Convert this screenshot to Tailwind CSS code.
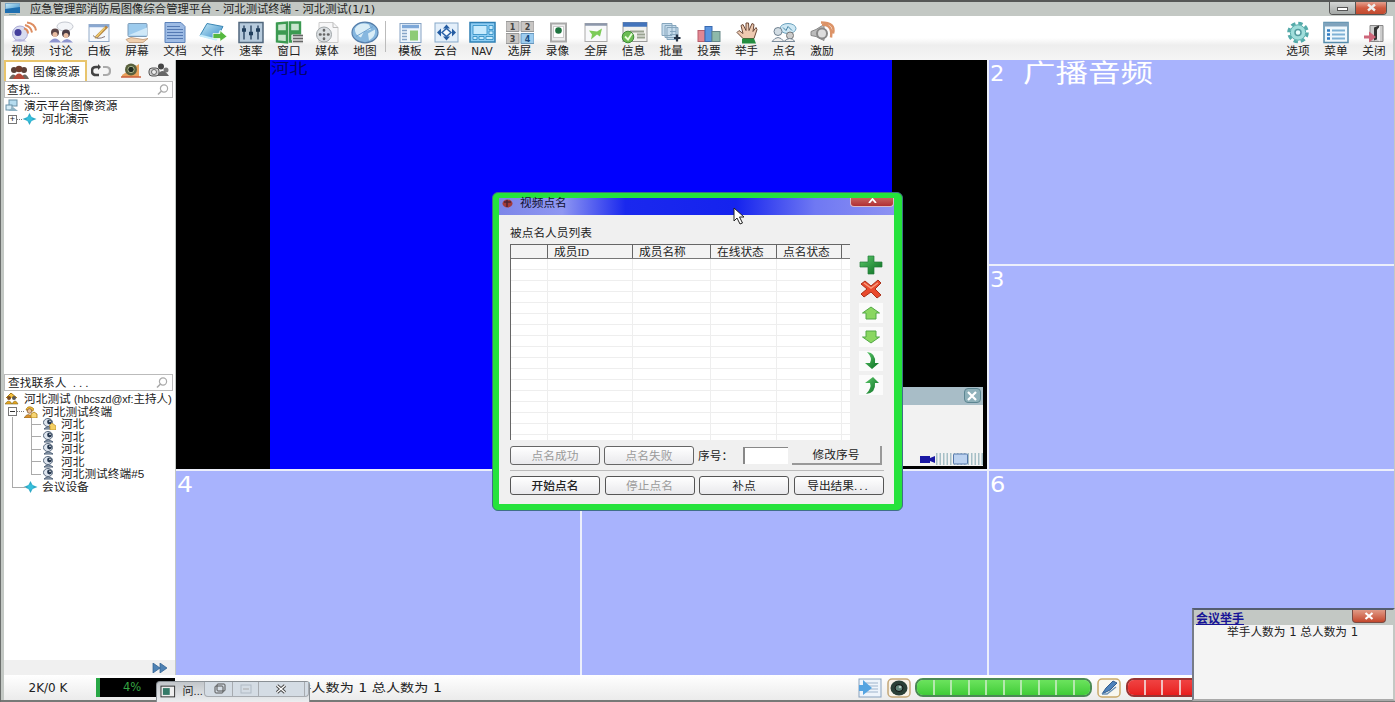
<!DOCTYPE html>
<html lang="zh-CN">
<head>
<meta charset="utf-8">
<title>图像综合管理平台</title>
<script src="https://cdn.jsdelivr.net/npm/@tailwindcss/browser@4"></script>
</head>
<body class="overflow-hidden">
<svg class="absolute h-0 w-0">
  <defs>
    <linearGradient id="gb" x1="0" y1="0" x2="1" y2="1"><stop offset="0" stop-color="#c4eaf8"/><stop offset="1" stop-color="#3488c6"/></linearGradient>
    <linearGradient id="gd" x1="0" y1="0" x2="1" y2="1"><stop offset="0" stop-color="#5cc96a"/><stop offset="1" stop-color="#086b20"/></linearGradient>
    <symbol id="star" viewBox="0 0 14 12"><path d="M7 0L9 4L14 6L9 8L7 12L5 8L0 6L5 4Z" fill="#2fa9c6"/><circle cx="7" cy="6" r="2.800" fill="#37bfdb"/></symbol>
    <symbol id="cam" viewBox="0 0 14 12"><ellipse cx="6" cy="4.500" rx="4.500" ry="4" fill="#dfe6ef" stroke="#56677c"/><circle cx="7.500" cy="4" r="2.400" fill="#26384f"/><circle cx="8" cy="3.300" r=".8" fill="#fff"/><path d="M2 11Q6 7 11 11Z" fill="#a9b7c8" stroke="#4f6076"/></symbol>
    <symbol id="home" viewBox="0 0 14 12"><path d="M1 5L6 0L12 5" fill="#f5c13c" stroke="#a87810"/><circle cx="4" cy="5" r="2" fill="#7a4b22"/><circle cx="9" cy="5" r="2" fill="#555"/><path d="M0 11Q4 5 7 11ZM7 11Q10 5 13 11Z" fill="#e8a51e" stroke="#7d6a1e" stroke-width=".6"/></symbol>
    <symbol id="user" viewBox="0 0 14 12"><path d="M2 4Q3 0 7 1Q11 2 9 5Z" fill="#f5c13c" stroke="#a87810" stroke-width=".8"/><circle cx="5.500" cy="5" r="2.300" fill="#e9c19a" stroke="#7a4b22" stroke-width=".7"/><path d="M0 12Q4 5 9 12Z" fill="#d98f2b" stroke="#7d5a1e" stroke-width=".6"/><path d="M7 8L10 6L13 8V12H7Z" fill="#f7d574" stroke="#a87810" stroke-width=".8"/></symbol>
    <symbol id="mag" viewBox="0 0 12 12"><circle cx="7" cy="4.500" r="3.600" fill="none" stroke="#aaa" stroke-width="1.200"/><path d="M4.500 7L1 10.500" stroke="#aaa" stroke-width="1.600"/></symbol>
  </defs>
</svg>
<div class="relative flex h-[702px] w-[1395px] flex-col overflow-hidden border-t-2 border-l border-t-[#555756] border-l-[#6b6e6c] bg-[#c3c8c4] font-['Liberation_Sans','Noto_Sans_CJK_SC',sans-serif] text-[11.7px] leading-none whitespace-nowrap text-[#222]">

  <!-- title bar -->
  <div class="flex h-[14px] shrink-0 items-center pl-1">
    <svg class="h-[12px] w-[15px]" viewBox="0 0 15 12"><rect x=".5" y=".5" width="14" height="9" fill="url(#gb)" stroke="#7ba8c8"/><path d="M0 6L15 4V10H0Z" fill="#1f6fb0"/><path d="M4 11.500H11" stroke="#8aa"/></svg>
    <span class="ml-[10px] pt-[2px] font-['DejaVu_Sans','Noto_Sans_CJK_SC',sans-serif] text-[11.300px] tracking-[0.05px]">应急管理部消防局图像综合管理平台 - 河北测试终端 - 河北测试(1/1)</span>
    <div class="mr-[8px] mb-[2px] ml-auto flex h-[13px] w-[58px] overflow-hidden rounded-b border border-t-0 border-[#555]">
      <div class="flex w-[25px] items-center justify-center bg-linear-to-b from-[#d5d7d6] to-[#a3a7a5]"><div class="mt-[3px] h-[4px] w-[11px] border border-[#555] bg-white"></div></div>
      <div class="flex flex-1 items-center justify-center border-l border-[#555] bg-linear-to-b from-[#e3a08f] via-[#d05a40] to-[#c14a2e]"><svg class="size-[9px]" viewBox="0 0 9 8"><path d="M1 1L8 7M8 1L1 7" stroke="#eee" stroke-width="2.400"/></svg></div>
    </div>
  </div>

  <!-- toolbar -->
  <div class="mr-[2px] ml-[3px] flex h-[44px] shrink-0 bg-linear-to-b from-white from-50% via-[#eeeeee] via-66% to-[#f5f5f5] pt-[5px] text-center [&>div]:flex [&>div]:shrink-0 [&>div]:flex-col [&>div]:items-center [&>div]:gap-px [&_svg]:h-[23px] [&_svg]:w-[28px]">
    <div class="w-[38px]"><svg viewBox="0 0 28 22"><circle cx="11" cy="12" r="7.500" fill="#d8dcf0" stroke="#a9a9d4"/><circle cx="9" cy="11" r="3.500" fill="#443f9c"/><path d="M3 20Q11 15 18 20Z" fill="#b7b6dd"/><path d="M15 7Q19 8 19 12M16 3.500Q22 5 23 11M18 1Q26 2 27 9" fill="none" stroke="#dd8d61" stroke-width="2"/></svg>视频</div>
    <div class="w-[38px]"><svg viewBox="0 0 28 22"><ellipse cx="18" cy="5" rx="8" ry="4.500" fill="#f3f5f8" stroke="#c4c8d0"/><circle cx="8" cy="11" r="4" fill="#5c4648"/><circle cx="8" cy="13" r="2.500" fill="#e9bda2"/><circle cx="19" cy="12" r="4" fill="#4b3c44"/><circle cx="19" cy="14" r="2.500" fill="#e9bda2"/><path d="M2 21Q8 13 14 21ZM14 21Q20 14 26 21Z" fill="#8e95cf"/></svg>讨论</div>
    <div class="w-[38px]"><svg viewBox="0 0 28 22"><rect x="4" y="3" width="20" height="17" fill="#f5f8fd" stroke="#93abc9"/><path d="M4 4.500H24" stroke="#89a7d0" stroke-width="2.500"/><path d="M11 16L22 5" stroke="#b78745" stroke-width="3"/><path d="M10 17L20 6" stroke="#f2cf6e" stroke-width="1.200"/><path d="M8 14Q12 19 20 15" fill="none" stroke="#877"/></svg>白板</div>
    <div class="w-[38px]"><svg viewBox="0 0 28 22"><rect x="5" y="2" width="19" height="13" rx="1" fill="#9dcbed" stroke="#7c9bb8"/><path d="M5 14L24 6V14Z" fill="#cfe8f8"/><path d="M3 18L8 16L20 18L25 17L20 21H6Z" fill="#efcfae" stroke="#b48b67" stroke-width=".7"/></svg>屏幕</div>
    <div class="w-[38px]"><svg viewBox="0 0 28 22"><path d="M4 1H20L24 5V21H4Z" fill="#9dbbe4" stroke="#5a80b8"/><path d="M6 5H19M6 8H22M6 11H22M6 14H22M6 17H22" stroke="#5479b3"/></svg>文档</div>
    <div class="w-[38px]"><svg viewBox="0 0 28 22"><path d="M8 2L24 5L17 18L1 14Z" fill="url(#gb)" stroke="#3b87b4"/><path d="M1 14L17 18L22 9" fill="none" stroke="#c5ecfb" stroke-width="2"/><path d="M14 12H21V9L28 15L21 20V17H14Z" fill="#55b83f" stroke="#fff" stroke-width=".7"/></svg>文件</div>
    <div class="w-[38px]"><svg viewBox="0 0 28 22"><rect x="2" y="1" width="24" height="20" fill="#b7cbdd" stroke="#51677d" stroke-width="1.500"/><path d="M7 4V18M14 4V18M21 4V18" stroke="#354f6b" stroke-width="1.500"/><path d="M5 8.500H9M12 12H16M19 8.500H23" stroke="#203e5c" stroke-width="3.500"/></svg>速率</div>
    <div class="w-[38px]"><svg viewBox="0 0 28 22"><path d="M2 2L12 1V10H2ZM15 1H25V10H15ZM2 12H12V21L2 20ZM15 12H25V20H15Z" fill="#c9e6cf" stroke="#3c9a52" stroke-width="2.400"/><rect x="17" y="13" width="11" height="9" fill="#ddd"/><path d="M18 14H28M18 17H28M18 20H28" stroke="#666" stroke-width="1.500"/></svg>窗口</div>
    <div class="w-[38px]"><svg viewBox="0 0 28 22"><path d="M6 1H20L25 6V21H6Z" fill="#f7f7f8" stroke="#ccc"/><path d="M20 1V6H25" fill="none" stroke="#bbb"/><circle cx="11" cy="13" r="7.500" fill="#dbdfe2" stroke="#9fa5a8"/><path d="M11 8.500V9M11 17V17.500M7 13H7.500M15 13H15.500M11 13H11.100" stroke="#666" stroke-width="2.600" stroke-linecap="round"/></svg>媒体</div>
    <div class="w-[38px]"><svg viewBox="0 0 28 22"><ellipse cx="14" cy="11" rx="13" ry="10.300" fill="#86b7df" stroke="#557eaa" stroke-width="1.200"/><path d="M4 7Q8 0 18 3L20 8L13 10L10 16Q3 13 4 7ZM17 12L24 8Q25 15 18 19Z" fill="#d9edf7"/><path d="M5 15L22 5" stroke="#6fa3d0"/></svg>地图</div>
    <div class="w-[8px]"><span class="-ml-[5px] block h-[31px] w-px bg-[#bbb]"></span></div>
    <div class="w-[36px]"><svg viewBox="0 0 28 22"><rect x="4" y="2" width="21" height="19" fill="#eff6fd" stroke="#85a2c3"/><path d="M6 5H23" stroke="#7ea8d8" stroke-width="3.500"/><path d="M6 9H11M6 12H11M6 15H11M6 18H11" stroke="#87a5c8" stroke-width="1.500"/><path d="M14 9H22V19H14Z" fill="#8ecb76"/></svg>模板</div>
    <div class="w-[35px]"><svg viewBox="0 0 28 22"><rect x="3" y="1.500" width="23" height="19" fill="#e3effa" stroke="#87a9ca"/><path d="M14.500 3L18 7H11ZM14.500 19L18 15H11ZM5 11L9 7V15ZM24 11L20 7V15Z" fill="#245ca2"/><path d="M14.500 7L19 11L14.500 15L10 11Z" fill="#f5fbff" stroke="#2c64aa" stroke-width="1.500"/></svg>云台</div>
    <div class="w-[38px]"><svg viewBox="0 0 28 22"><rect x="2" y="1" width="25" height="19.500" fill="#8dcdf4" stroke="#2e7fb4" stroke-width="1.500"/><path d="M5 4H19V13H5ZM21 4H25V8H21ZM21 9.500H25V13H21ZM5 15H9V18H5ZM11 15H16V18H11ZM18 15H25V18H18Z" fill="#c8ebfd" stroke="#2989bf" stroke-width=".8"/></svg><span class="font-['DejaVu_Sans'] text-[10.500px] leading-[12px]">NAV</span></div>
    <div class="w-[37px]"><svg viewBox="0 0 28 22"><path d="M0 0H13V10H0ZM15 0H28V10H15ZM0 12H13V22H0Z" fill="#c9c6c4" stroke="#999"/><path d="M15 12H28V22H15Z" fill="#9dcdf0" stroke="#6796bd"/><g font-size="8" font-weight="bold" fill="#444" text-anchor="middle" font-family="DejaVu Sans"><text x="6.500" y="8">1</text><text x="21.500" y="8">2</text><text x="6.500" y="20">3</text><text x="21.500" y="20" fill="#174c83">4</text></g></svg>选屏</div>
    <div class="w-[39px]"><svg viewBox="0 0 28 22"><rect x="7" y="2" width="15" height="18" fill="#eee" stroke="#aaa" stroke-width="2"/><rect x="9.500" y="5" width="10" height="11" fill="#fff" stroke="#ccc"/><circle cx="14.500" cy="9" r="3.300" fill="#1f7440"/></svg>录像</div>
    <div class="w-[37.700px]"><svg viewBox="0 0 28 22"><rect x="3" y="2" width="22" height="18" fill="#f8f9fb" stroke="#aaa"/><path d="M3 3H25" stroke="#8d97ab" stroke-width="2.500"/><path d="M7 9L15 10L20 7L18 15L15 13L9 18L10 13Z" fill="#7ccb58"/></svg>全屏</div>
    <div class="w-[37.700px]"><svg viewBox="0 0 28 22"><rect x="3" y="1" width="24" height="19" fill="#f1f1ee" stroke="#999"/><path d="M3 3H27" stroke="#4374bb" stroke-width="4.500"/><path d="M10 10H24M17 13H25M17 16H25" stroke="#9aa392" stroke-width="2"/><circle cx="8" cy="15.500" r="5.800" fill="#6cbc54" stroke="#3f8e38"/><path d="M5 15L8 18L12 12" fill="none" stroke="#eaffdc" stroke-width="1.800"/></svg>信息</div>
    <div class="w-[37.700px]"><svg viewBox="0 0 28 22"><path d="M5 2H15V14H5ZM8 4H19V16H8ZM10 6H21V18H10Z" fill="#c6dcec" stroke="#86a6bd"/><path d="M13 10H19M13 13H19" stroke="#85a6bd"/><path d="M20 13V20M17 16.500H23.500" stroke="#243345" stroke-width="2.200"/></svg>批量</div>
    <div class="w-[37.700px]"><svg viewBox="0 0 28 22"><rect x="3" y="9" width="7" height="11" fill="#e28792" stroke="#b95e6c"/><rect x="10" y="5" width="7" height="15" fill="#5b95df" stroke="#3869b0"/><rect x="17" y="10" width="8" height="10" fill="#8eb9aa" stroke="#688"/></svg>投票</div>
    <div class="w-[37.700px]"><svg viewBox="0 0 28 22"><path d="M10 17L4 11L6 9L10 12L8 4L10 3L13 9L13 1.500L15.500 1.500L16 9L19 2L21 3L20 10L23 6L24 8L21 17Z" fill="#eecab1" stroke="#6b4939"/><path d="M9 17H21L23 22H9Z" fill="#238d40"/></svg>举手</div>
    <div class="w-[37.700px]"><svg viewBox="0 0 28 22"><ellipse cx="18" cy="7" rx="8" ry="5" fill="#cee8f4" stroke="#6aa1bd"/><path d="M13 6L16 9L18 5L22 9" stroke="#4987a8" fill="none"/><circle cx="8" cy="10" r="4" fill="#d3dde4" stroke="#718291"/><circle cx="20" cy="14" r="3.500" fill="#ccc" stroke="#777"/><path d="M2 20Q8 12 14 20ZM14 20Q20 14 25 20Z" fill="#eee" stroke="#798a9a"/></svg>点名</div>
    <div class="w-[37.700px]"><svg viewBox="0 0 28 22"><path d="M3 10L8 8L16 3V19L8 15L3 14Z" fill="#bbb" stroke="#888"/><circle cx="14" cy="12" r="5" fill="#ddd" stroke="#888" stroke-width="2"/><path d="M14 3Q25 3 23 16M13 1Q28 1 25 12" fill="none" stroke="#dc9367" stroke-width="2.500"/></svg>激励</div>
    <div class="ml-auto w-[38px]"><svg viewBox="0 0 28 22"><circle cx="14" cy="11" r="9.300" fill="none" stroke="#54aaa9" stroke-width="3" stroke-dasharray="4.400 2.900"/><circle cx="14" cy="11" r="7.700" fill="#a0dedb" stroke="#59aeac"/><circle cx="14" cy="11" r="3" fill="#eaffff" stroke="#549c9f" stroke-width="1.500"/></svg>选项</div>
    <div class="w-[38px]"><svg viewBox="0 0 28 22"><rect x="2" y="1" width="24" height="20" fill="#eff8fd" stroke="#548baa" stroke-width="1.500"/><path d="M2 3H26" stroke="#7fa3bd" stroke-width="4"/><path d="M5 9H8M5 13H8M5 17H8" stroke="#2f7cc3" stroke-width="2.400"/><path d="M10 9H23M10 13H23M10 17H23" stroke="#7eb1d5" stroke-width="2"/></svg>菜单</div>
    <div class="w-[38px]"><svg viewBox="0 0 28 22"><path d="M10 4H23V20H10Z" fill="#ccc" stroke="#888"/><path d="M14 6L19 4V17L14 19Z" fill="#333"/><path d="M17 8V18L20 20V5Z" fill="#eee"/><path d="M4 14H9V10L16 15.500L9 21V17H4Z" fill="#ce667a"/></svg>关闭</div>
  </div>

  <!-- body -->
  <div class="flex h-[615px] shrink-0">
    <div class="ml-[3px] flex w-[171px] shrink-0 flex-col bg-white">
      <div class="flex h-[21px] shrink-0 items-center bg-[#f5f5f5]">
        <div class="flex h-[21px] w-[83px] items-center gap-[4px] border-2 border-b-0 border-[#e8c46c] bg-white pl-[3px]">
          <svg class="h-[14px] w-[20px]" viewBox="0 0 20 14"><circle cx="5" cy="5" r="3" fill="#5a4038"/><circle cx="15" cy="5" r="3" fill="#5a4038"/><circle cx="10" cy="4" r="3.300" fill="#6d3c2e"/><path d="M0 14Q4 5 9 14ZM11 14Q16 5 20 14Z" fill="#6f6760"/><path d="M4 14Q10 3 16 14Z" fill="#b44a3a"/></svg>
          图像资源
        </div>
        <svg class="ml-[4px] h-[14px] w-[20px]" viewBox="0 0 20 14"><path d="M8 3H5Q1 3 1 7T5 11H8" fill="none" stroke="#444" stroke-width="2.600"/><path d="M7 0V6L10 3Z" fill="#444"/><path d="M12 3H15Q19 3 19 7T15 11H12" fill="none" stroke="#aaa" stroke-width="2.200"/></svg>
        <svg class="ml-[10px] h-[15px] w-[20px]" viewBox="0 0 20 15"><path d="M1 12L18 1V14H1Z" fill="#e7a05c"/><circle cx="10" cy="6.500" r="6" fill="#59613d"/><circle cx="10" cy="6.500" r="3.200" fill="#202a20" stroke="#aab58b"/><path d="M0 14H20" stroke="#c85e3a" stroke-width="1.500"/></svg>
        <svg class="ml-[7px] h-[15px] w-[22px]" viewBox="0 0 22 15"><circle cx="13" cy="3.500" r="3" fill="#444"/><circle cx="18" cy="7" r="2.500" fill="#777"/><path d="M9 13Q14 3 21 13Z" fill="#666"/><rect x="1" y="5" width="10" height="8" rx="3" fill="#ccc" stroke="#555"/><circle cx="6" cy="9" r="2.500" fill="#eee" stroke="#666"/></svg>
      </div>
      <div class="flex h-[17px] w-[169px] shrink-0 items-center justify-between border border-[#bbb] pr-[3px] pl-[2px]">查找...<svg class="size-[12px]"><use href="#mag"/></svg></div>
      <div class="flex h-[15px] shrink-0 items-center gap-[5px] pl-[1px]"><svg class="h-[13px] w-[14px]" viewBox="0 0 14 13"><rect x="4" y="1" width="8" height="6" fill="#b5dcef" stroke="#678fa5"/><rect x="1" y="6" width="6" height="5" fill="#d7edf7" stroke="#678fa5"/><path d="M8 8L13 12H3Z" fill="#8eb2c3"/></svg>演示平台图像资源</div>
      <div class="flex h-[12px] shrink-0 items-center pl-[4px]"><span class="flex size-[9px] items-center justify-center border border-[#777] text-[9px] leading-none">+</span><span class="w-[5px] border-t border-dotted border-[#777]"></span><svg class="h-[12px] w-[15px]"><use href="#star"/></svg><span class="ml-[5px]">河北演示</span></div>
      <div class="mt-auto flex h-[17px] w-[169px] shrink-0 items-center justify-between border border-[#bbb] pr-[4px] pl-[3px]"><span>查找联系人<span class="tracking-[3px]"> ...</span></span><svg class="size-[12px]"><use href="#mag"/></svg></div>
      <div class="relative flex h-[269px] shrink-0 flex-col pt-[2px] [&>div]:flex [&>div]:h-[12.500px] [&>div]:items-center">
        <svg class="absolute top-[20px] left-0 h-[82px] w-[44px]" fill="none" stroke="#aaa" shape-rendering="crispEdges"><path d="M8.500 6V76.500H22M27.500 4V63.500H37M27.500 13.500H37M27.500 25.500H37M27.500 38.500H37M27.500 50.500H37"/></svg>
        <div class="gap-[5px] pl-[1px]"><svg class="h-[12px] w-[14px]"><use href="#home"/></svg><span>河北测试 <span class="text-[10.700px]">(hbcszd@xf:</span><span class="text-[11.500px]">主持人)</span></span></div>
        <div class="pl-[4px]"><span class="relative flex size-[9px] items-center justify-center border border-[#777] bg-white text-[9px]"><span class="h-px w-[5px] bg-[#333]"></span></span><span class="w-[7px] border-t border-dotted border-[#777]"></span><svg class="relative h-[12px] w-[14px]"><use href="#user"/></svg><span class="ml-[4px]">河北测试终端</span></div>
        <div class="gap-[5px] pl-[38px]"><svg class="h-[12px] w-[14px]" viewBox="0 0 14 12"><use href="#cam"/><path d="M7 8L10 5L14 8V12H8V8Z" fill="#f4cf61" stroke="#b88b28" stroke-width=".7"/></svg>河北</div>
        <div class="gap-[5px] pl-[38px]"><svg class="h-[12px] w-[14px]"><use href="#cam"/></svg>河北</div>
        <div class="gap-[5px] pl-[38px]"><svg class="h-[12px] w-[14px]"><use href="#cam"/></svg>河北</div>
        <div class="gap-[5px] pl-[38px]"><svg class="h-[12px] w-[14px]"><use href="#cam"/></svg>河北</div>
        <div class="gap-[5px] pl-[38px]"><svg class="h-[12px] w-[14px]"><use href="#cam"/></svg>河北测试终端#5</div>
        <div class="gap-[4px] pl-[19px]"><svg class="h-[12px] w-[15px]"><use href="#star"/></svg>会议设备</div>
      </div>
      <div class="flex h-[15px] shrink-0 items-center justify-end bg-[#f0f0f0] pr-[7px]"><svg class="h-[10px] w-[16px]" viewBox="0 0 16 10"><path d="M1 0L8 5L1 10ZM8 0L15 5L8 10Z" fill="#4e82b4" stroke="#2b5c8c" stroke-width=".7"/></svg></div>
    </div>

    <!-- video wall -->
    <div class="ml-px grid w-[1218px] shrink-0 grid-cols-[404px_404.500px_405.500px] grid-rows-[203.500px_203px_204.500px] gap-[2px] bg-[#eceffb] font-['DejaVu_Sans','Noto_Sans_CJK_SC',sans-serif] text-[21px] leading-none text-white [&>div]:bg-[#a8b3fd]">
      <div class="relative col-span-2 row-span-2 flex justify-center bg-black!">
        <div class="w-[622px] bg-[#0000fe] pt-[1px] pl-[1px] text-[14px] text-[#04046e]"><span class="inline-block origin-left scale-x-[1.300]">河北</span></div>
        <div class="absolute right-[4px] bottom-[3px] flex h-[79px] w-[90px] flex-col bg-[#f2f2f2]">
          <div class="flex h-[18px] items-center justify-end bg-[#a8bdc7] pr-[2px]"><div class="flex h-[15px] w-[17px] items-center justify-center rounded-sm border border-[#5c8591] bg-[#8fb1ba]"><svg class="size-[10px]" viewBox="0 0 10 10"><path d="M1 1L9 9M9 1L1 9" stroke="#fff" stroke-width="2.200"/></svg></div></div>
          <div class="mt-auto flex h-[13px] items-center justify-end">
            <svg class="h-[9px] w-[16px]" viewBox="0 0 16 9"><path d="M0 1H10V3L15 1V8L10 6V8H0Z" fill="#1a18a4"/></svg>
            <svg class="h-[12px] w-[47px]" viewBox="0 0 47 12"><path d="M0 6H47" stroke="#a6bfc6" stroke-width="12" stroke-dasharray="1.500 2"/><rect x="17.500" y="1" width="14" height="10" rx="1" fill="#bcd2f0" stroke="#5678ab"/></svg>
          </div>
        </div>
      </div>
      <div class="flex items-start pt-[4px] pl-px"><span class="inline-block origin-left scale-x-[1.080]">2</span><span class="-mt-[3px] ml-[20px] inline-block origin-left scale-x-[1.300] text-[25px]">广播音频</span></div>
      <div class="pt-[4px] pl-px"><span class="inline-block origin-left scale-x-[1.080]">3</span></div>
      <div class="pt-[4px] pl-px"><span class="inline-block origin-left scale-x-[1.200]">4</span></div>
      <div></div>
      <div class="pt-[4px] pl-px"><span class="inline-block origin-left scale-x-[1.150]">6</span></div>
    </div>
  </div>

  <!-- status bar -->
  <div class="ml-[3px] flex h-[25px] shrink-0 items-center bg-linear-to-b from-white to-[#ebebeb] font-['DejaVu_Sans','Noto_Sans_CJK_SC',sans-serif] [&>*]:shrink-0">
    <div class="w-[92px] pr-[4px] text-center text-[12px]">2K/0 K</div>
    <div class="flex h-[19px] w-[79px] items-center border-l-4 border-[#28a745] bg-black pl-[23px] text-[11.500px] text-[#35a443]">4%</div>
    <div class="ml-[108px] w-[160px] pt-[3px] text-[11.800px]"><span class="inline-block origin-left scale-x-[1.200]">举手人数为 1 总人数为 1</span></div>
    <svg class="ml-auto h-[20px] w-[24px]" viewBox="0 0 24 20"><rect x="1" y="1" width="22" height="18" fill="#eef4fb" stroke="#88a1bd"/><path d="M8 5H20M10 8H20M10 11H20M8 14H20" stroke="#9fb4cc"/><path d="M1 7H5V2L14 10L5 17V13H1Z" fill="#55a4e1"/></svg>
    <svg class="ml-[5px] h-[20px] w-[24px]" viewBox="0 0 24 20"><rect x="1" y="1" width="22" height="18" rx="4" fill="#f7f2e8" stroke="#c4a777" stroke-width="1.500"/><ellipse cx="12" cy="10" rx="8.500" ry="7.500" fill="#293f37"/><ellipse cx="12" cy="10" rx="4" ry="3.500" fill="#5f8579" stroke="#111"/><circle cx="13" cy="9" r="1.300" fill="#b4cac2"/></svg>
    <div class="ml-[4px] grid h-[19px] w-[177px] grid-cols-10 gap-[2px] overflow-hidden rounded-lg border-2 border-[#4a8a54] bg-[#b5e8ae] [&>i]:bg-linear-to-b [&>i]:from-[#6be35d] [&>i]:to-[#3fcc37]"><i></i><i></i><i></i><i></i><i></i><i></i><i></i><i></i><i></i><i></i></div>
    <svg class="ml-[5px] h-[20px] w-[24px]" viewBox="0 0 24 20"><rect x="1" y="1" width="22" height="18" rx="4" fill="#f8f7f0" stroke="#c9a969" stroke-width="1.500"/><path d="M5 16L9 10L16 3L20 5L13 12L9 14Z" fill="#4e83bc" stroke="#315c8d"/><path d="M5 16H10L19 9" fill="none" stroke="#6b92b8" stroke-width="1.500"/></svg>
    <div class="mr-[92px] ml-[5px] grid h-[19px] w-[177px] grid-cols-10 gap-[2px] overflow-hidden rounded-lg border-2 border-[#933] bg-[#f1c0c0] [&>i]:bg-linear-to-b [&>i]:from-[#f04242] [&>i]:to-[#e81c1c]"><i></i><i></i><i></i><i></i><i></i><i></i><i></i><i></i><i></i><i></i></div>
  </div>
  <div class="h-[2px] shrink-0 bg-[#777977]"></div>

  <!-- minimised window over the status bar -->
  <div class="absolute top-[679px] left-[155px] flex h-[21px] w-[154px] items-start rounded-t border border-b-0 border-[#8a9095] bg-linear-to-b from-[#c2c6ca] to-[#eceef0]">
    <svg class="mt-[3px] ml-[3px] h-[13px] w-[16px]" viewBox="0 0 16 13"><rect x="1" y="1" width="14" height="11" fill="#eee" stroke="#333"/><rect x="3" y="3" width="7" height="7" fill="#357a68"/></svg>
    <span class="mt-[4px] ml-[7px] w-[22px] text-[11px]">问...</span>
    <div class="flex h-[15px] flex-1 items-center rounded-b border border-t-0 border-[#a7abb0] bg-[#d4dce4]">
      <svg class="h-[14px] w-[103px]" viewBox="0 0 103 14" fill="none"><path d="M27.500 0V14M53.500 0V14M99.500 0V14" stroke="#a7abb0"/><rect x="10" y="4" width="8" height="7" rx="1" stroke="#555"/><rect x="12" y="2" width="8" height="7" rx="1" stroke="#555"/><rect x="36" y="3" width="10" height="8" stroke="#b0bac4"/><path d="M38 7H44" stroke="#aaa"/><path d="M72 3.500L80 10.500M80 3.500L72 10.500" stroke="#444" stroke-width="3.200"/><path d="M72 3.500L80 10.500M80 3.500L72 10.500" stroke="#fff" stroke-width="1.300"/></svg>
    </div>
  </div>

  <!-- raised hands notice -->
  <div class="absolute top-[606px] left-[1191px] flex h-[93px] w-[203px] flex-col border-2 border-t-[#555e70] border-r-[#c3c8c4] border-b-[#aaa] border-l-[#777c88] bg-[#f4f4f4]">
    <div class="flex h-[15px] shrink-0 justify-between bg-[#c3c8c4] pr-[7px] pl-[2px]">
      <span class="pt-[3px] text-[12px] font-bold text-[#171397] underline">会议举手</span>
      <div class="flex h-[13px] w-[34px] items-center justify-center rounded-b border border-t-0 border-[#7a4a42] bg-linear-to-b from-[#e09a86] to-[#c3462b]"><svg class="h-[8px] w-[10px]" viewBox="0 0 9 8"><path d="M1 1L8 7M8 1L1 7" stroke="#fff" stroke-width="2.200"/></svg></div>
    </div>
    <div class="pt-[2px] pl-[33px] font-['DejaVu_Sans','Noto_Sans_CJK_SC',sans-serif] text-[11.700px]">举手人数为 1 总人数为 1</div>
  </div>

  <!-- roll-call dialog -->
  <div class="absolute top-[190px] left-[491px] h-[319px] w-[411px] rounded-md border border-[#3f6f88] bg-[#25e33c] pt-[5px] pr-[8px] pb-[6px] pl-[6px]">
    <div class="flex h-full flex-col bg-[#f0f0f0]">
      <div class="flex h-[17px] shrink-0 items-start justify-between bg-[linear-gradient(to_right,#7d86e8_0%,#8f97f2_16%,#1a28ee_32%,#1523ee_60%,#6f78f3_80%,#8d92f2_100%)]">
        <div class="flex h-[10px] items-center gap-[7px] pl-[3px]"><svg class="h-[9px] w-[11px]" viewBox="0 0 11 9"><ellipse cx="5.500" cy="4.500" rx="5" ry="4" fill="#a43a3a"/><path d="M2 3H9M5 1V8" stroke="#4b2436" stroke-width="1.500"/></svg><span class="text-[#101030]">视频点名</span></div>
        <div class="flex h-[9px] w-[44px] items-start justify-center rounded-b-sm border border-t-0 border-[#d9b9c8] bg-linear-to-b from-[#c75f5c] to-[#b02e34]"><svg class="h-[5px] w-[9px]" viewBox="0 0 9 5"><path d="M1 5L4.500 1L8 5" fill="none" stroke="#fff" stroke-width="1.800"/></svg></div>
      </div>
      <div class="flex flex-1 flex-col pt-[12px] pr-[10px] pl-[11px]">
        <span class="h-[17px]">被点名人员列表</span>
        <div class="flex h-[196px] shrink-0">
          <div class="flex w-[340px] flex-col border-t border-l border-[#666] bg-white">
            <div class="grid h-[14px] shrink-0 grid-cols-[37px_85px_78px_66px_65px_8px] border-b border-[#777] bg-[#f3f3f3] [&>span]:border-r [&>span]:border-[#666] [&>span]:pt-px [&>span]:pl-[6px]"><span></span><span>成员<span class="font-['Liberation_Serif'] text-[11px]">ID</span></span><span>成员名称</span><span>在线状态</span><span>点名状态</span><b></b></div>
            <div class="grid flex-1 grid-cols-[37px_85px_78px_66px_65px] bg-[repeating-linear-gradient(to_bottom,transparent_0,transparent_10.200px,#eeeeee_10.200px,#eeeeee_11px)] [&>i]:border-r [&>i]:border-[#eeeeee]"><i></i><i></i><i></i><i></i><i></i></div>
          </div>
          <div class="ml-[9px] flex w-[24px] flex-col items-center gap-[4px] pt-[11px] [&>svg]:h-[20px] [&>svg]:w-[24px] [&>svg]:shrink-0">
            <svg viewBox="0 0 24 20"><path d="M9 1H15V7H23V12H15V19H9V12H1V7H9Z" fill="url(#gd)" stroke="#247c3a" stroke-width=".7"/></svg>
            <svg viewBox="0 0 24 20"><path d="M2 5L6 2L12 7L19 1L22 4L16 10L22 16L18 19L12 13L5 18L2 15L8 10Z" fill="#e94a2d" stroke="#aa3019"/><path d="M5 4L12 9L19 4" fill="none" stroke="#fa9c7d" stroke-width="1.500"/></svg>
            <svg class="bg-white/70" viewBox="0 0 24 20"><path d="M12 4L20.500 10H17V16H7V10H3.500Z" fill="#8ad761" stroke="#52a846"/></svg>
            <svg class="bg-white/70" viewBox="0 0 24 20"><path d="M12 16L20.500 10H17V4H7V10H3.500Z" fill="#8ad761" stroke="#52a846"/></svg>
            <svg class="bg-white/70" viewBox="0 0 24 20"><path d="M8 1Q17 2 16 12H20L13 18L6 12H11Q14 7 8 1Z" fill="url(#gd)"/></svg>
            <svg class="bg-white/70" viewBox="0 0 24 20"><path d="M7 19Q17 18 16 8H20L14 2L6 8H11Q13 13 7 19Z" fill="url(#gd)"/></svg>
          </div>
        </div>
        <div class="mt-[6px] flex h-[19px] shrink-0 items-center gap-[4px] [&>div]:flex [&>div]:h-[19px] [&>div]:items-center [&>div]:justify-center">
          <div class="w-[90px] rounded-[3px] border-[1.500px] border-[#666] bg-linear-to-b from-white to-[#e9e9ec] text-[#9a9a9a]">点名成功</div>
          <div class="w-[90px] rounded-[3px] border-[1.500px] border-[#666] bg-linear-to-b from-white to-[#e9e9ec] text-[#9a9a9a]">点名失败</div>
          <span class="w-[41px]">序号：</span>
          <div class="h-[17px]! w-[45px] border-t border-l-2 border-[#888] bg-white"></div>
          <div class="w-[90px] border-r-2 border-b-2 border-[#999] bg-[#f0f0f0]">修改序号</div>
        </div>
        <div class="my-[5px] h-px shrink-0 bg-[#bbb]"></div>
        <div class="flex h-[19px] shrink-0 gap-[4.500px] [&>div]:flex [&>div]:w-[90px] [&>div]:items-center [&>div]:justify-center [&>div]:rounded-[3px] [&>div]:border [&>div]:border-[#555] [&>div]:bg-linear-to-b [&>div]:from-white [&>div]:to-[#e9e9ec]">
          <div class="font-medium">开始点名</div><div class="text-[#9a9a9a]">停止点名</div><div>补点</div><div>导出结果<span class="tracking-[2px]">...</span></div>
        </div>
      </div>
    </div>
  </div>

  <!-- pointer -->
  <svg class="absolute top-[205px] left-[732px] h-[18px] w-[12px]" viewBox="0 0 12 18"><path d="M1 1V14L4 11L7 17L9.500 16L6.500 10H11Z" fill="#fff" stroke="#222"/></svg>
</div>
</body>
</html>
